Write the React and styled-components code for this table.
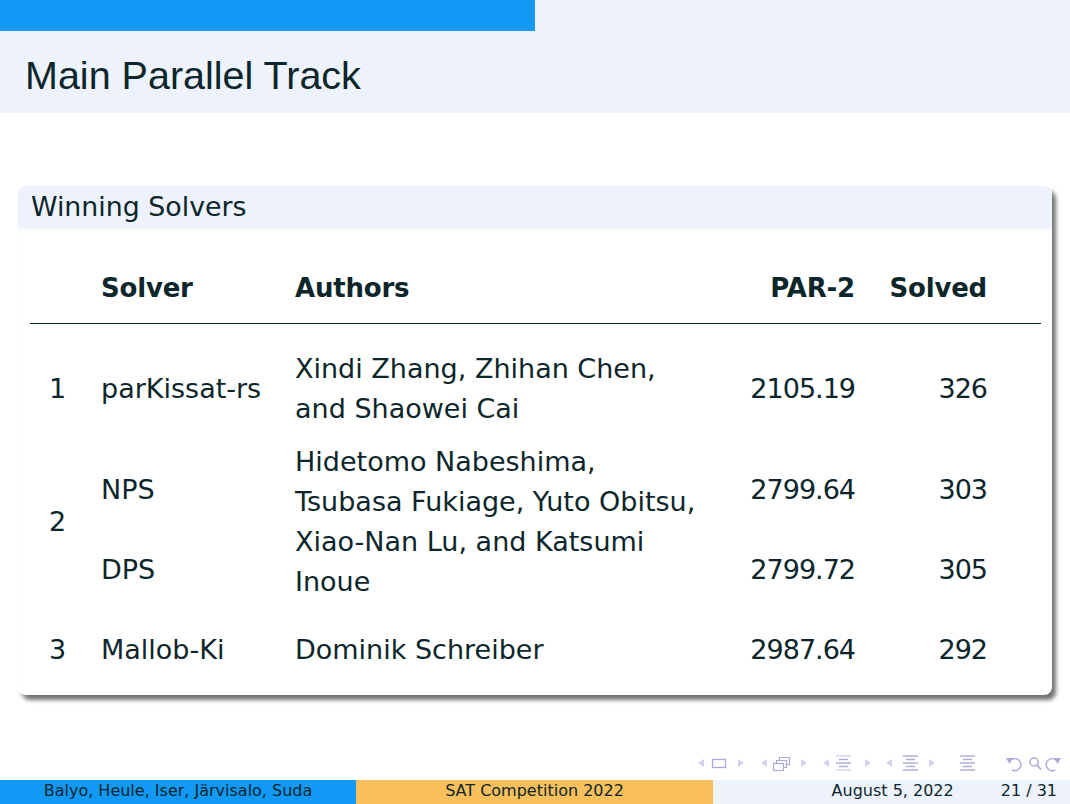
import React from 'react'
import styled, { createGlobalStyle } from 'styled-components'

// palette

const ink = '#0c262b'
const pale = '#eef2fc'
const blue = '#1199f5'
const orange = '#f9bf5d'
const navInk = '#a9a9dc'
const navSoft = '#d3d3ef'

const GlobalStyle = createGlobalStyle`
  html, body {
    margin: 0;
    padding: 0;
    background: #fff;
  }
  body {
    font-family: 'DejaVu Sans', 'Liberation Sans', sans-serif;
    color: ${ink};
  }
`

// frame

const Slide = styled.div`
  width: 1070px;
  height: 804px;
  display: flex;
  flex-direction: column;
  overflow: hidden;
  background: #fff;
`

const TopStrip = styled.div`
  height: 31px;
  display: grid;
  grid-template-columns: 535px 1fr;
  background: ${pale};

  &::before {
    content: '';
    background: ${blue};
  }
`

const Header = styled.header`
  height: 82px;
  background: ${pale};
  display: flex;
  align-items: center;
  padding: 6px 0 0 25px;
  box-sizing: border-box;
`

const Title = styled.h1`
  margin: 0;
  font-family: 'Liberation Sans', 'DejaVu Sans', sans-serif;
  font-weight: normal;
  font-size: 39.5px;
  color: ${ink};
`

const Main = styled.main`
  flex: 1;
  padding: 73px 18px 0 18px;
`

// block

const Block = styled.section`
  width: 1034px;
  border-radius: 8px;
  background: #fff;
  box-shadow: 4px 5px 4px rgba(0, 0, 0, 0.55);
  overflow: hidden;
`

const BlockTitle = styled.div`
  height: 44px;
  display: flex;
  align-items: center;
  padding: 0 0 3px 13px;
  box-sizing: border-box;
  font-size: 26.8px;
  background: linear-gradient(${pale} 88%, #f6f8fd);
`

const BlockBody = styled.div`
  padding: 33px 11px 25px 12px;
`

// table

const Grid = styled.div`
  display: grid;
  grid-template-columns: 71px 194px 430px 130px 132px 1fr;
  grid-template-rows: 50px 10px 1px 25px 80px 13px 96px 64px 28px 40px;
  font-size: 27px;
`

const Cell = styled.div`
  grid-column: ${(p) => p.$col};
  grid-row: ${(p) => p.$row};
  display: flex;
  align-items: center;
  justify-content: ${(p) => (p.$right ? 'flex-end' : 'flex-start')};
  padding-left: ${(p) => p.$indent || 0}px;
  line-height: 40px;
  white-space: nowrap;
`

const HeadCell = styled(Cell)`
  font-weight: bold;
  font-size: 26px;
  letter-spacing: -0.2px;
`

const Num = styled(Cell)`
  letter-spacing: -1px;
`

const Rule = styled.div`
  grid-column: 1 / -1;
  grid-row: 3;
  background: ${ink};
`

const Lines = styled.div`
  white-space: normal;
`

// footer

const NavRow = styled.div`
  height: 27px;
  display: flex;
  justify-content: flex-end;
  align-items: flex-start;
  padding-right: 2px;
`

const Footer = styled.footer`
  height: 24px;
  display: grid;
  grid-template-columns: 356px 357px 1fr;
  font-size: 16px;
  line-height: 22px;
`

const FootCell = styled.div`
  background: ${(p) => p.$bg};
  display: flex;
  align-items: flex-start;
  justify-content: ${(p) => p.$justify || 'center'};
  gap: 47px;
  padding-right: ${(p) => p.$pad || 0}px;
  white-space: nowrap;
`

function Lined({ x, hi }) {
  const c = hi ? navInk : navSoft
  return (
    <g>
      <line x1={x} x2={x + 15} y1={3} y2={3} stroke={c} strokeWidth="1.4" />
      <line x1={x + 3} x2={x + 12} y1={6.5} y2={6.5} stroke={navInk} strokeWidth="1.4" />
      <line x1={x} x2={x + 15} y1={10} y2={10} stroke={navInk} strokeWidth="1.4" />
      <line x1={x + 3} x2={x + 12} y1={13.5} y2={13.5} stroke={navInk} strokeWidth="1.4" />
      <line x1={x} x2={x + 15} y1={17} y2={17} stroke={c} strokeWidth="1.4" />
    </g>
  )
}

function Tri({ x, left }) {
  const pts = left ? `${x + 6},6 ${x + 6},14 ${x},10` : `${x},6 ${x},14 ${x + 6},10`
  return <polygon points={pts} fill={navSoft} />
}

function NavSymbols() {
  return (
    <svg width="378" height="22" viewBox="0 0 378 22">
      <Tri x={8} left />
      <rect x="22.5" y="6.5" width="13" height="8" fill="none" stroke={navInk} strokeWidth="1.3" />
      <Tri x={48} />
      <Tri x={71} left />
      <rect x="83.5" y="10.5" width="10" height="7" fill="#fff" stroke={navInk} strokeWidth="1.2" />
      <path d="M86.5 10.5 V7.5 H96.5 V14.5 H93.5" fill="none" stroke={navInk} strokeWidth="1.2" />
      <path d="M89.5 7.5 V4.5 H99.5 V11.5 H96.5" fill="none" stroke={navInk} strokeWidth="1.2" />
      <Tri x={111} />
      <Tri x={133} left />
      <Lined x={146} />
      <Tri x={175} />
      <Tri x={196} left />
      <Lined x={213} hi />
      <Tri x={239} />
      <Lined x={270} hi />
      <path d="M321 7 A6 6 0 1 1 322 17" fill="none" stroke={navInk} strokeWidth="1.5" />
      <polygon points="316,5 323,5 319.5,11" fill={navInk} />
      <circle cx="344" cy="9" r="4" fill="none" stroke={navInk} strokeWidth="1.5" />
      <line x1="347" y1="12" x2="351" y2="16.5" stroke={navInk} strokeWidth="1.8" />
      <path d="M366 7 A6 6 0 1 0 365 17" fill="none" stroke={navInk} strokeWidth="1.5" />
      <polygon points="371,5 364,5 367.5,11" fill={navInk} />
    </svg>
  )
}

function SolverTable() {
  return (
    <Grid>
      <HeadCell $col={2} $row={1}>Solver</HeadCell>
      <HeadCell $col={3} $row={1}>Authors</HeadCell>
      <HeadCell $col={4} $row={1} $right>PAR-2</HeadCell>
      <HeadCell $col={5} $row={1} $right>Solved</HeadCell>
      <Rule />

      <Cell $col={1} $row={5} $indent={19}>1</Cell>
      <Cell $col={2} $row={5}>parKissat-rs</Cell>
      <Cell $col={3} $row={5}>
        <Lines>
          Xindi Zhang, Zhihan Chen,
          <br />
          and Shaowei Cai
        </Lines>
      </Cell>
      <Num $col={4} $row={5} $right>2105.19</Num>
      <Num $col={5} $row={5} $right>326</Num>

      <Cell $col={1} $row="7 / span 2" $indent={19}>2</Cell>
      <Cell $col={2} $row={7}>NPS</Cell>
      <Cell $col={3} $row="7 / span 2">
        <Lines>
          Hidetomo Nabeshima,
          <br />
          Tsubasa Fukiage, Yuto Obitsu,
          <br />
          Xiao-Nan Lu, and Katsumi
          <br />
          Inoue
        </Lines>
      </Cell>
      <Num $col={4} $row={7} $right>2799.64</Num>
      <Num $col={5} $row={7} $right>303</Num>
      <Cell $col={2} $row={8}>DPS</Cell>
      <Num $col={4} $row={8} $right>2799.72</Num>
      <Num $col={5} $row={8} $right>305</Num>

      <Cell $col={1} $row={10} $indent={19}>3</Cell>
      <Cell $col={2} $row={10}>Mallob-Ki</Cell>
      <Cell $col={3} $row={10}>Dominik Schreiber</Cell>
      <Num $col={4} $row={10} $right>2987.64</Num>
      <Num $col={5} $row={10} $right>292</Num>
    </Grid>
  )
}

export default function App() {
  return (
    <>
      <GlobalStyle />
      <Slide>
        <TopStrip />
        <Header>
          <Title>Main Parallel Track</Title>
        </Header>
        <Main>
          <Block>
            <BlockTitle>Winning Solvers</BlockTitle>
            <BlockBody>
              <SolverTable />
            </BlockBody>
          </Block>
        </Main>
        <NavRow>
          <NavSymbols />
        </NavRow>
        <Footer>
          <FootCell $bg={blue}>Balyo, Heule, Iser, Järvisalo, Suda</FootCell>
          <FootCell $bg={orange}>SAT Competition 2022</FootCell>
          <FootCell $bg={pale} $justify="flex-end" $pad={13}>
            <span>August 5, 2022</span>
            <span>21 / 31</span>
          </FootCell>
        </Footer>
      </Slide>
    </>
  )
}
